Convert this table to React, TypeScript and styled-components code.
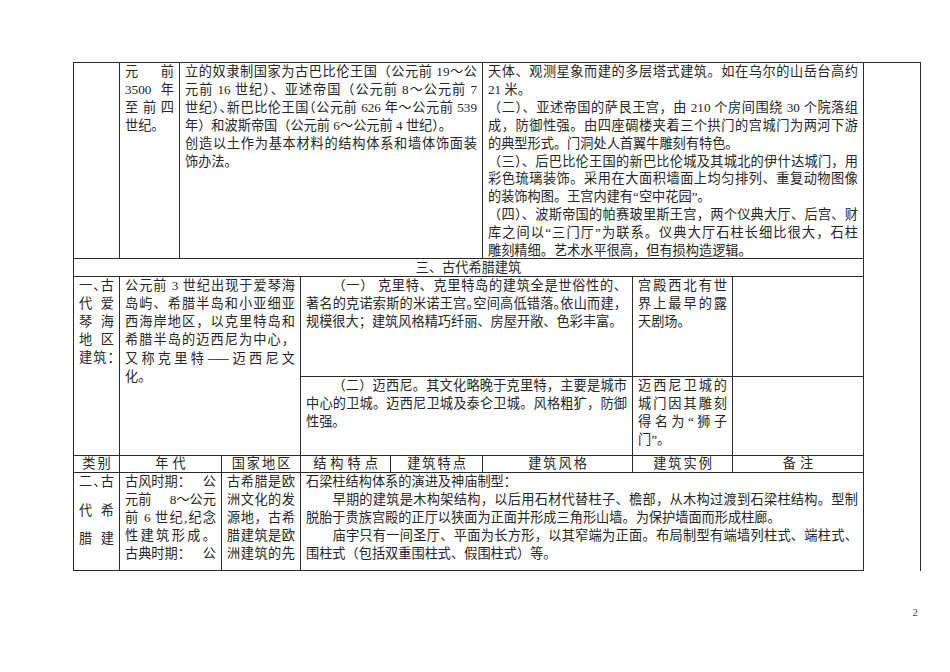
import React from "react";
import styled, { createGlobalStyle } from "styled-components";

const Global = createGlobalStyle`
  html, body { margin: 0; padding: 0; background: #ffffff; }
  body {
    font-family: "Liberation Serif", "Noto Sans CJK SC", serif;
    text-autospace: no-autospace;
  }
`;

const INK = "#2a2a2a";

const Page = styled.div`
  width: 950px;
  height: 672px;
  box-sizing: border-box;
  padding: 62px 0 0 73px;
  background: #ffffff;
  color: #262626;
  font-family: "Liberation Serif", "Noto Sans CJK SC", serif;
  font-size: 13.2px;
  line-height: 18.1px;
  overflow: hidden;
`;

const Sheet = styled.div`
  display: grid;
  width: 848px;
  box-sizing: border-box;
  grid-template-columns: 46px 60px 42px 79px 90px 92px 150px 100px 131px 57px;
  grid-template-rows: 196px 18px 100px 79px 17px 98px;
  border-top: 1px solid ${INK};
  border-left: 1px solid ${INK};
`;

const Cell = styled.div<{ $col: string; $row: string; $open?: boolean; $lh?: number }>`
  grid-column: ${(p) => p.$col};
  grid-row: ${(p) => p.$row};
  box-sizing: border-box;
  min-width: 0;
  padding: 0 5px;
  border-right: 1px solid ${INK};
  border-bottom: ${(p) => (p.$open ? "none" : `1px solid ${INK}`)};
  ${(p) => (p.$lh ? `line-height: ${p.$lh}px;` : "")}
`;

const Caption = styled(Cell)`
  line-height: 17px;
  text-align: center;
`;

const Head = styled(Cell)<{ $ls: number }>`
  line-height: 16px;
  text-align: center;
  letter-spacing: ${(p) => p.$ls}px;
  padding-left: ${(p) => 5 + p.$ls}px;
`;

const Line = styled.div<{ $j?: boolean; $indent?: boolean }>`
  text-align: ${(p) => (p.$j ? "justify" : "left")};
  text-align-last: ${(p) => (p.$j ? "justify" : "auto")};
  text-indent: ${(p) => (p.$indent ? "2em" : "0")};
`;

const Spread = styled.div`
  display: flex;
  justify-content: space-between;
`;

const Tall = styled.div`
  line-height: 28.6px;
  margin-top: -5px;
`;

const T = styled.span`
  font-feature-settings: "halt" 1;
`;

const Dash = styled.span`
  font-family: "Noto Sans CJK SC", sans-serif;
`;

const Folio = styled.div`
  width: 848px;
  box-sizing: border-box;
  margin-top: 35px;
  padding-right: 3px;
  text-align: right;
  font-size: 11px;
  line-height: 13px;
  color: #4a4a4a;
`;

const S = ({ items }: { items: string[] }) => (
  <Spread>
    {items.map((t, i) => (
      <span key={i}>{t}</span>
    ))}
  </Spread>
);

export default function App() {
  return (
    <>
      <Global />
      <Page>
        <Sheet>
          {/* row 1 : continued from previous page */}
          <Cell $col="1 / 2" $row="1 / 2" />
          <Cell $col="2 / 3" $row="1 / 2" $lh={17.9}>
            <S items={["元", "前"]} />
            <S items={["3500", "年"]} />
            <S items={["至", "前", "四"]} />
            <Line>世纪。</Line>
          </Cell>
          <Cell $col="3 / 7" $row="1 / 2" $lh={17.9}>
            <Line $j>立的奴隶制国家为古巴比伦王国（公元前 19～公</Line>
            <Line $j>元前 16 世纪）、亚述帝国（公元前 8～公元前 7</Line>
            <Line $j>
              世纪<T>）、</T>新巴比伦王国<T>（</T>公元前 626 年～公元前 539
            </Line>
            <Line>年）和波斯帝国（公元前 6～公元前 4 世纪）。</Line>
            <Line $j>创造以土作为基本材料的结构体系和墙体饰面装</Line>
            <Line>饰办法。</Line>
          </Cell>
          <Cell $col="7 / 10" $row="1 / 2" $lh={17.9}>
            <Line $j>天体、观测星象而建的多层塔式建筑。如在乌尔的山岳台高约</Line>
            <Line>21 米。</Line>
            <Line $j>（二）、亚述帝国的萨艮王宫，由 210 个房间围绕 30 个院落组</Line>
            <Line $j>成，防御性强。由四座碉楼夹着三个拱门的宫城门为两河下游</Line>
            <Line>的典型形式。门洞处人首翼牛雕刻有特色。</Line>
            <Line $j>（三）、后巴比伦王国的新巴比伦城及其城北的伊什达城门，用</Line>
            <Line $j>彩色琉璃装饰。采用在大面积墙面上均匀排列、重复动物图像</Line>
            <Line>的装饰构图。王宫内建有“空中花园”。</Line>
            <Line $j>（四）、波斯帝国的帕赛玻里斯王宫，两个仪典大厅、后宫、财</Line>
            <Line $j>库之间以“三门厅”为联系。仪典大厅石柱长细比很大，石柱</Line>
            <Line>雕刻精细。艺术水平很高，但有损构造逻辑。</Line>
          </Cell>
          <Cell $col="10 / 11" $row="1 / 7" $open />

          {/* row 2 : section caption */}
          <Caption $col="1 / 10" $row="2 / 3">三、古代希腊建筑</Caption>

          {/* row 3 : Aegean */}
          <Cell $col="1 / 2" $row="3 / 5">
            <Line $j>
              一<T>、</T>古
            </Line>
            <S items={["代", "爱"]} />
            <S items={["琴", "海"]} />
            <S items={["地", "区"]} />
            <Line $j>
              建筑<T>：</T>
            </Line>
          </Cell>
          <Cell $col="2 / 5" $row="3 / 5">
            <Line $j>公元前 3 世纪出现于爱琴海</Line>
            <Line $j>岛屿、希腊半岛和小亚细亚</Line>
            <Line $j>西海岸地区，以克里特岛和</Line>
            <Line $j>希腊半岛的迈西尼为中心，</Line>
            <Line $j>
              又称克里特<Dash>——</Dash>迈西尼文
            </Line>
            <Line>化。</Line>
          </Cell>
          <Cell $col="5 / 8" $row="3 / 4">
            <Line $j $indent>
              （一） 克里特、克里特岛的建筑全是世俗性的、
            </Line>
            <Line $j>
              著名的克诺索斯的米诺王宫<T>。</T>空间高低错落<T>。</T>依山而建，
            </Line>
            <Line>规模很大；建筑风格精巧纤丽、房屋开敞、色彩丰富。</Line>
          </Cell>
          <Cell $col="8 / 9" $row="3 / 4">
            <Line $j>宫殿西北有世</Line>
            <Line $j>界上最早的露</Line>
            <Line>天剧场。</Line>
          </Cell>
          <Cell $col="9 / 10" $row="3 / 4" />
          <Cell $col="5 / 8" $row="4 / 5">
            <Line $j $indent>
              （二）迈西尼。其文化略晚于克里特，主要是城市
            </Line>
            <Line $j>中心的卫城。迈西尼卫城及泰仑卫城。风格粗犷，防御</Line>
            <Line>性强。</Line>
          </Cell>
          <Cell $col="8 / 9" $row="4 / 5">
            <Line $j>迈西尼卫城的</Line>
            <Line $j>城门因其雕刻</Line>
            <Line $j>得名为“狮子</Line>
            <Line>门”。</Line>
          </Cell>
          <Cell $col="9 / 10" $row="4 / 5" />

          {/* row 4 : column headings */}
          <Head $col="1 / 2" $row="5 / 6" $ls={2}>类别</Head>
          <Head $col="2 / 4" $row="5 / 6" $ls={4}>年代</Head>
          <Head $col="4 / 5" $row="5 / 6" $ls={2}>国家地区</Head>
          <Head $col="5 / 6" $row="5 / 6" $ls={4}>结构特点</Head>
          <Head $col="6 / 7" $row="5 / 6" $ls={2}>建筑特点</Head>
          <Head $col="7 / 8" $row="5 / 6" $ls={2}>建筑风格</Head>
          <Head $col="8 / 9" $row="5 / 6" $ls={2}>建筑实例</Head>
          <Head $col="9 / 10" $row="5 / 6" $ls={4}>备注</Head>

          {/* row 5 : ancient Greece */}
          <Cell $col="1 / 2" $row="6 / 7">
            <Tall>
              <Line $j>
                二<T>、</T>古
              </Line>
              <S items={["代", "希"]} />
              <S items={["腊", "建"]} />
            </Tall>
          </Cell>
          <Cell $col="2 / 4" $row="6 / 7">
            <S items={["古风时期：", "公"]} />
            <S items={["元前", "8～公元"]} />
            <Line $j>前 6 世纪,纪念</Line>
            <Line $j>性建筑形成。</Line>
            <S items={["古典时期：", "公"]} />
          </Cell>
          <Cell $col="4 / 5" $row="6 / 7">
            <Line $j>古希腊是欧</Line>
            <Line $j>洲文化的发</Line>
            <Line $j>源地，古希</Line>
            <Line $j>腊建筑是欧</Line>
            <Line $j>洲建筑的先</Line>
          </Cell>
          <Cell $col="5 / 10" $row="6 / 7">
            <Line>石梁柱结构体系的演进及神庙制型：</Line>
            <Line $j $indent>
              早期的建筑是木构架结构，以后用石材代替柱子、檐部，从木构过渡到石梁柱结构。型制
            </Line>
            <Line>脱胎于贵族宫殿的正厅以狭面为正面并形成三角形山墙。为保护墙面而形成柱廊。</Line>
            <Line $j $indent>
              庙宇只有一间圣厅、平面为长方形，以其窄端为正面。布局制型有端墙列柱式、端柱式、
            </Line>
            <Line>围柱式（包括双重围柱式、假围柱式）等。</Line>
          </Cell>
        </Sheet>
        <Folio>2</Folio>
      </Page>
    </>
  );
}
